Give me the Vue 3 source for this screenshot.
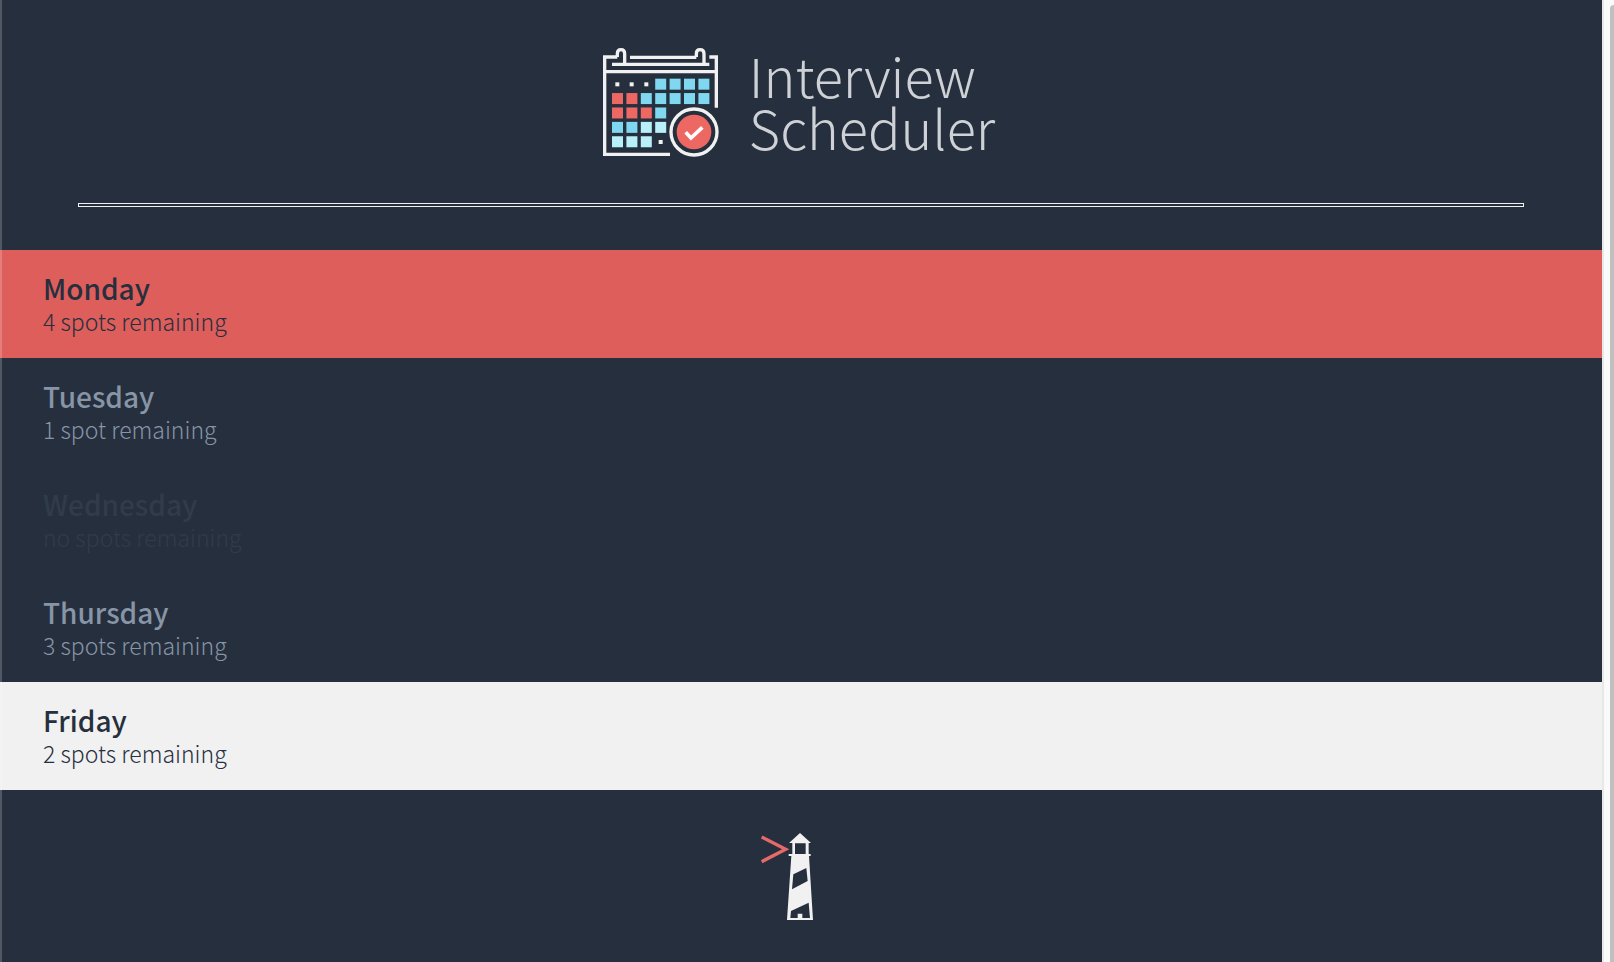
<script setup>
import { ref } from 'vue'

const days = [
  { name: 'Monday', spots: 4 },
  { name: 'Tuesday', spots: 1 },
  { name: 'Wednesday', spots: 0 },
  { name: 'Thursday', spots: 3 },
  { name: 'Friday', spots: 2 },
]
const selected = ref('Monday')
const highlighted = ref('Friday')

const remaining = (n) => (n === 0 ? 'no spots remaining' : n === 1 ? '1 spot remaining' : `${n} spots remaining`)

const cell = (row, col, tone) => ({ x: 66 + col * 43.2, y: 131 + row * 43.2, tone })
const rows = ['...bbbb', 'rrbbbbb', 'rrrb', 'bbll', 'lll']
const tones = { b: 'sky', r: 'coral', l: 'ice' }
const cells = rows.flatMap((r, i) =>
  [...r].flatMap((c, j) => (tones[c] ? [cell(i, j, tones[c])] : []))
)
</script>

<template>
  <div class="layout">
    <section class="sidebar">
      <header class="logo">
        <svg class="calendar" viewBox="36 36 354 330" aria-hidden="true">
          <g fill="none" stroke="#f1f1f1" stroke-width="10">
            <path d="M82 66H44V358H240" />
            <path d="M120 67H319M358 66H379V218" />
            <path d="M66 88H358" />
            <path d="M44 110H379" />
            <path d="M82 66V56Q82 44 93 44Q104 44 104 56V88M319 66V56Q319 44 330 44Q342 44 342 56V88" />
          </g>
          <g fill="#f1f1f1">
            <rect x="76" y="142" width="12" height="12" />
            <rect x="119" y="142" width="12" height="12" />
            <rect x="163" y="142" width="12" height="12" />
            <rect x="206" y="315" width="12" height="12" />
          </g>
          <rect v-for="c in cells" :key="`${c.x}-${c.y}`" :class="c.tone" :x="c.x" :y="c.y" width="33" height="33" />
          <circle cx="312" cy="291" r="69" fill="#262f3e" stroke="#f1f1f1" stroke-width="10" />
          <circle cx="312" cy="291" r="52" class="coral" />
          <path d="M287 292L303 309L337 277" fill="none" stroke="#fff" stroke-width="11" />
        </svg>
        <h1 class="title">Interview<br />Scheduler</h1>
      </header>
      <hr class="separator" />
      <nav>
        <ul class="days">
          <li v-for="day in days" :key="day.name">
            <button
              type="button"
              class="day"
              :class="{ selected: day.name === selected, hovered: day.name === highlighted, full: !day.spots }"
              :disabled="!day.spots"
              @click="selected = day.name"
            >
              <span class="name">{{ day.name }}</span>
              <span class="spots">{{ remaining(day.spots) }}</span>
            </button>
          </li>
        </ul>
      </nav>
      <footer class="footer">
        <svg class="lighthouse" viewBox="60 36 246 267" role="img" aria-label="Lighthouse">
          <path d="M65 51L137 88L65 125" fill="none" stroke="#e66a68" stroke-width="10" />
          <path d="M180 39L213 69H206V102H212V108H207L219 300H141L154 108H146V102H157V69H147Z" fill="#f1f1f1" />
          <path d="M165 70H197V102H165ZM160 163L199 144L203 183L156 208ZM153 273L206 248L210 294H187V281H173V294H151Z" fill="#262f3e" />
        </svg>
      </footer>
    </section>
    <div class="divider"></div>
    <div class="gutter"><div class="thumb"></div></div>
  </div>
</template>

<style>
body {
  margin: 0;
  background: #fafafa;
}
</style>

<style scoped>
.layout {
  display: flex;
  min-height: 100vh;
  font-family: "Noto Sans CJK SC", "Noto Sans", sans-serif;
}
.sidebar {
  position: relative;
  display: flex;
  flex-direction: column;
  flex: 1;
  background: #262f3e;
}
.sidebar::before {
  content: "";
  position: absolute;
  inset: 0 auto 0 0;
  width: 2px;
  background: rgba(255, 255, 255, 0.2);
}
.logo {
  display: flex;
  justify-content: center;
  gap: 29px;
  padding: 47px 5px 46px 0;
}
.calendar {
  width: 118px;
  height: 110px;
}
.sky { fill: #7fd8f0; }
.coral { fill: #ee6863; }
.ice { fill: #b9eff8; }
.title {
  margin: 2px 0 0;
  color: #ced1d5;
  font-size: 54px;
  font-weight: 300;
  line-height: 52px;
}
.separator {
  box-sizing: border-box;
  height: 4px;
  margin: 0 78px 43px;
  border: 1px solid #f1f1f1;
}
.days {
  margin: 0;
  padding: 0;
  list-style: none;
}
.day {
  display: flex;
  flex-direction: column;
  box-sizing: border-box;
  width: 100%;
  height: 108px;
  padding: 19px 43px;
  border: 0;
  background: none;
  color: #8795a6;
  font-family: inherit;
  text-align: left;
  cursor: pointer;
}
.name {
  font-size: 28px;
  font-weight: 500;
  line-height: 38px;
}
.spots {
  font-size: 23px;
  font-weight: 300;
  line-height: 28px;
}
.selected {
  background: #dd5e5b;
  color: #262f3e;
}
.hovered {
  background: #f1f1f1;
  color: #262f3e;
}
.full {
  color: #303c4a;
  cursor: default;
}
.footer {
  display: flex;
  justify-content: center;
  padding: 42px 0 40px;
}
.lighthouse {
  width: 82px;
  height: 89px;
}
.divider {
  width: 2px;
  background: #e8e8e8;
}
.gutter {
  display: flex;
  justify-content: flex-end;
  width: 10px;
  padding-top: 5px;
  box-sizing: border-box;
  background: #fafafa;
}
.thumb {
  width: 4px;
  border-radius: 4px 0 0 0;
  background: #bfbfbf;
}
</style>
